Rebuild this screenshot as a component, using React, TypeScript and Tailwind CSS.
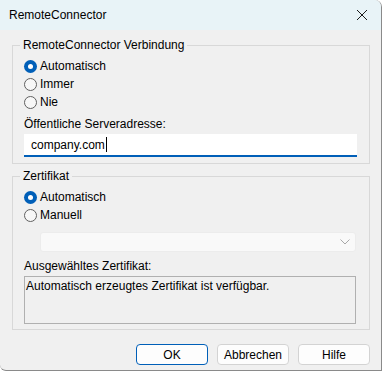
import React from "react";

const font = { fontFamily: '"Liberation Sans", "Noto Sans", sans-serif' };

function Radio({ checked, label }: { checked?: boolean; label: string }) {
  return (
    <div className="flex h-[18px] items-center gap-[3px]">
      {checked ? (
        <div className="flex h-[13px] w-[13px] items-center justify-center rounded-full bg-[#005fb8]">
          <div className="h-[5px] w-[5px] rounded-full bg-white" />
        </div>
      ) : (
        <div className="h-[13px] w-[13px] rounded-full border border-[#606060] bg-[#f7f7f7]" />
      )}
      <span className="text-[12px] leading-[16px] text-black">{label}</span>
    </div>
  );
}

function Button({ label, primary }: { label: string; primary?: boolean }) {
  return (
    <div
      className={
        "flex h-[21px] w-[72px] items-center justify-center rounded-[4px] bg-[#fdfdfd] text-[12px] leading-[16px] text-black " +
        (primary ? "border border-[#005fb8]" : "border border-[#d3d3d3]")
      }
    >
      {label}
    </div>
  );
}

export default function App() {
  return (
    <div
      className="flex h-[371px] w-[382px] flex-col overflow-hidden rounded-tr-[7px] rounded-bl-[6px] border-r border-b border-[#8a8a8a] bg-[#f0f0f0] text-[12px] leading-[16px]"
      style={font}
    >
      {/* title bar */}
      <div className="flex h-[30px] shrink-0 items-center justify-between bg-[#e8f3f7] pl-[9px] pr-[12px]">
        <span className="text-[12px] leading-[16px] text-black">RemoteConnector</span>
        <svg width="12" height="12" viewBox="0 0 12 12" className="mr-[1px]">
          <path d="M1 1 L11 11 M11 1 L1 11" stroke="#1a1a1a" strokeWidth="1" />
        </svg>
      </div>

      {/* group 1 */}
      <fieldset className="mx-[12px] mt-[7px] mr-[11px] border border-[#d8d8d8] pr-[12px] pb-[6px] pl-[11px]">
        <legend className="ml-[-4px] px-[3px] text-[12px] leading-[16px] text-black">
          RemoteConnector Verbindung
        </legend>
        <div className="mt-[4px] flex flex-col">
          <Radio checked label="Automatisch" />
          <Radio label="Immer" />
          <Radio label="Nie" />
        </div>
        <div className="mt-[5px] text-[12px] leading-[16px] text-black">Öffentliche Serveradresse:</div>
        <div className="mt-[2px] flex h-[23px] items-center border-b-2 border-[#005fb8] bg-white pl-[7px]">
          <span className="text-[12px] leading-[16px] text-black">company.com</span>
          <span className="ml-[1px] h-[15px] w-[1px] bg-black" />
        </div>
      </fieldset>

      {/* group 2 */}
      <fieldset className="mx-[12px] mt-[4px] mr-[11px] border border-[#d8d8d8] pr-[13px] pb-[5px] pl-[11px]">
        <legend className="ml-[-4px] px-[3px] text-[12px] leading-[16px] text-black">Zertifikat</legend>
        <div className="mt-[4px] flex flex-col">
          <Radio checked label="Automatisch" />
          <Radio label="Manuell" />
        </div>
        <div className="mt-[8px] ml-[16px] flex h-[20px] items-center justify-end rounded-[3px] border border-[#ececec] bg-[#f9f9f9] pr-[5px]">
          <svg width="10" height="6" viewBox="0 0 10 6">
            <path d="M0.5 0.5 L5 5 L9.5 0.5" stroke="#a8a8a8" strokeWidth="1" fill="none" />
          </svg>
        </div>
        <div className="mt-[6px] text-[12px] leading-[16px] text-black">Ausgewähltes Zertifikat:</div>
        <div className="mt-[2px] h-[48px] border border-[#b0b0b0] bg-[#f0f0f0] px-[1px] pt-[1px] text-[12px] leading-[16px] text-black">
          Automatisch erzeugtes Zertifikat ist verfügbar.
        </div>
      </fieldset>

      {/* buttons */}
      <div className="mt-[14px] flex justify-end gap-[9px] pr-[11px]">
        <Button label="OK" primary />
        <Button label="Abbrechen" />
        <Button label="Hilfe" />
      </div>
    </div>
  );
}
